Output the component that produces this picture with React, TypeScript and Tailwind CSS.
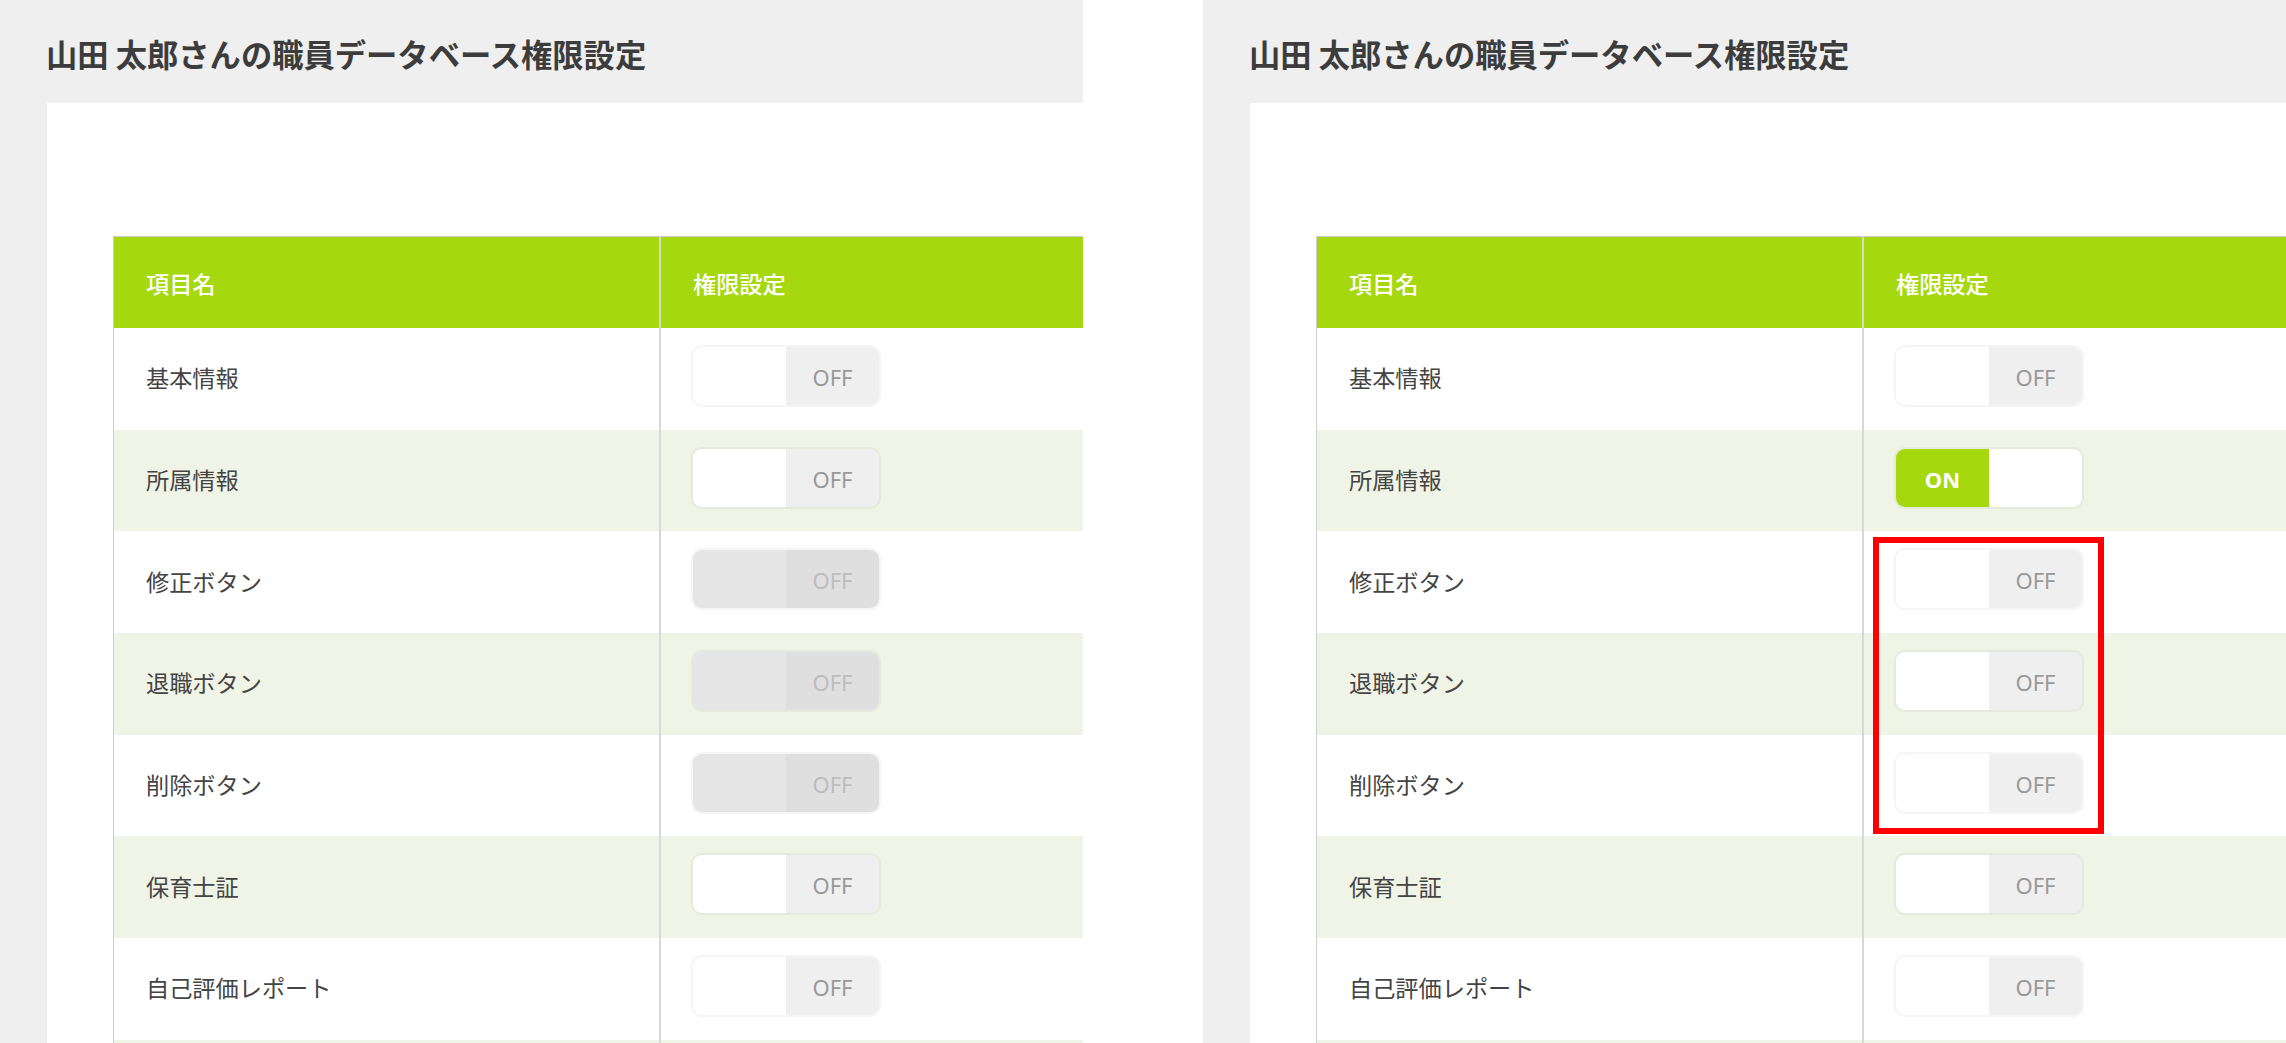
import { clsx } from "clsx";

type Row = {
  label: string;
  left: "off" | "disabled";
  right: "off" | "on";
};

const rows: Row[] = [
  { label: "基本情報", left: "off", right: "off" },
  { label: "所属情報", left: "off", right: "on" },
  { label: "修正ボタン", left: "disabled", right: "off" },
  { label: "退職ボタン", left: "disabled", right: "off" },
  { label: "削除ボタン", left: "disabled", right: "off" },
  { label: "保育士証", left: "off", right: "off" },
  { label: "自己評価レポート", left: "off", right: "off" },
];

function Toggle({ state }: { state: "off" | "on" | "disabled" }) {
  const labelFont = "font-['Noto_Sans',sans-serif] text-[22px] leading-none pt-[2px]";
  return (
    <div className="flex h-[62px] w-[190px] overflow-hidden rounded-[11px] border-2 border-black/[0.04] bg-clip-padding">
      {state === "on" ? (
        <>
          <div className={clsx("flex w-[93px] items-center justify-center bg-[#a6d80f] font-bold text-white", labelFont)}>
            ON
          </div>
          <div className="flex-1 bg-white" />
        </>
      ) : (
        <>
          <div className={clsx("w-[93px]", state === "disabled" ? "bg-[#e5e5e5]" : "bg-white")} />
          <div
            className={clsx(
              "flex flex-1 items-center justify-center",
              labelFont,
              state === "disabled" ? "bg-[#dfdfdf] text-[#bcbcbc]" : "bg-[#efefef] text-[#999999]",
            )}
          >
            OFF
          </div>
        </>
      )}
    </div>
  );
}

function Panel({ variant }: { variant: "left" | "right" }) {
  return (
    <section className="relative flex h-full w-[1083px] flex-col overflow-hidden bg-[#efefef]">
      <div className="flex h-[103px] shrink-0 items-center pl-[46px] pt-[4px]">
        <h1 className="text-[31.3px] font-bold leading-none text-[#3c3c3c]">
          山田 太郎さんの職員データベース権限設定
        </h1>
      </div>

      <div className="ml-[47px] flex-1 bg-white pl-[66px] pt-[133px]">
        <div className="border-l border-t border-[#cfcfcf]">
          {/* Header */}
          <div className="grid h-[91px] grid-cols-[547px_1fr] bg-[#a6d80f] text-[23.2px] font-medium text-white">
            <div className="flex items-center border-r-2 border-[#d5dcc0] pl-[32px] pt-[2px]">項目名</div>
            <div className="flex items-center pl-[32px] pt-[2px]">権限設定</div>
          </div>

          {/* Rows */}
          {rows.map((row, i) => (
            <div
              key={row.label}
              className={clsx(
                "grid h-[101.67px] grid-cols-[547px_1fr] text-[23.2px] text-[#444444]",
                i % 2 === 1 ? "bg-[#f0f4e6]" : "bg-white",
              )}
            >
              <div className="flex items-center border-r-2 border-[#d8d8d8] pb-[2px] pl-[32px]">{row.label}</div>
              <div className="pl-[30px] pt-[17px]">
                <Toggle state={variant === "left" ? row.left : row.right} />
              </div>
            </div>
          ))}

          {/* Next row, cut by the bottom of the window */}
          <div className="grid h-[20px] grid-cols-[547px_1fr] bg-[#f0f4e6]">
            <div className="border-r-2 border-[#d8d8d8]" />
            <div />
          </div>
        </div>
      </div>

      {variant === "right" && (
        <div className="absolute left-[670px] top-[537px] h-[297px] w-[231px] border-[6px] border-[#ff0000]" />
      )}
    </section>
  );
}

export default function App() {
  return (
    <div className="flex h-[1043px] w-[2286px] justify-between overflow-hidden bg-white font-['Noto_Sans_CJK_JP',sans-serif]">
      <Panel variant="left" />
      <Panel variant="right" />
    </div>
  );
}
